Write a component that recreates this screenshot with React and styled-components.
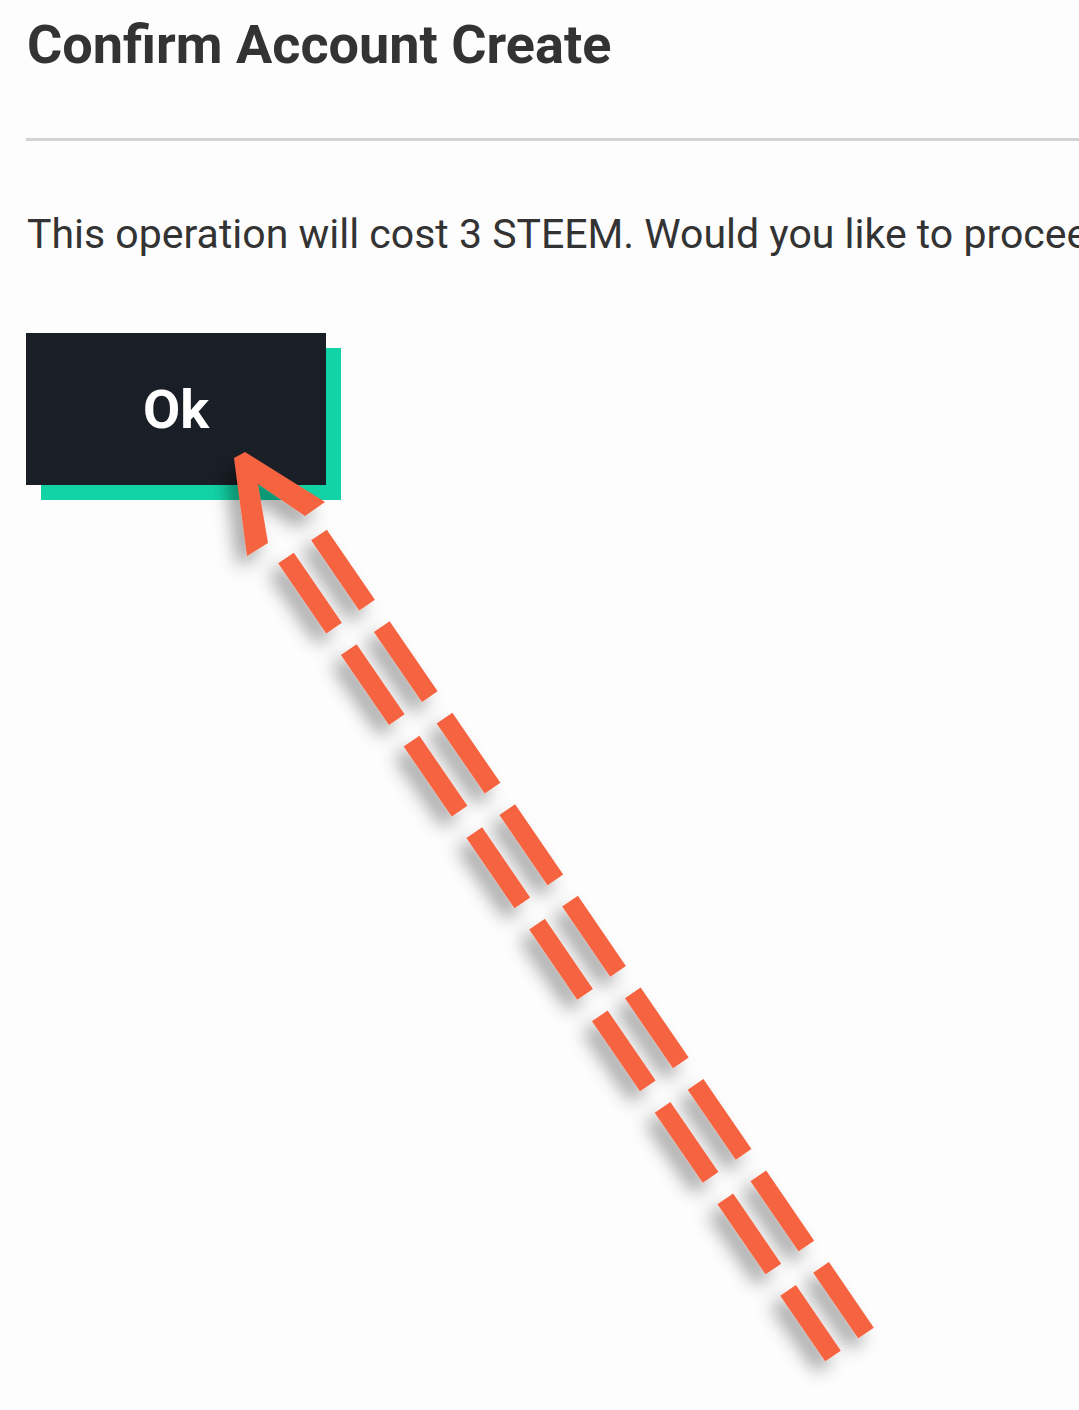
import styled, { createGlobalStyle } from "styled-components"

const GlobalStyle = createGlobalStyle`
    html, body {
        margin: 0;
        padding: 0;
        background: #fdfdfd;
        overflow: hidden;
    }
    body {
        font-family: Roboto, "Liberation Sans", sans-serif;
    }
`

const App = () => {
    return (
        <Page>
            <GlobalStyle />
            <Dialog>
                <Title>Confirm Account Create</Title>
                <Divider />
                <Message>This operation will cost 3 STEEM. Would you like to proceed?</Message>
                <OkButton type="button">Ok</OkButton>
            </Dialog>
            <PointerArrow />
        </Page>
    )
}

export default App

const PointerArrow = () => (
    <ArrowLayer viewBox="0 0 1079 1410" width="1079" height="1410">
        <defs>
            <filter id="arrowShadow" x="-20%" y="-20%" width="140%" height="140%">
                <feDropShadow dx="-9" dy="11" stdDeviation="9" floodColor="#000" floodOpacity="0.36" />
            </filter>
        </defs>
        <g filter="url(#arrowShadow)" fill="#f5633f" stroke="#f5633f">
            <line x1="286" y1="558" x2="833" y2="1356" strokeWidth="19" strokeDasharray="85 26" />
            <line x1="319" y1="535" x2="866" y2="1333" strokeWidth="19" strokeDasharray="85 26" />
            <polygon
                stroke="none"
                points="234,458 245,452 325,502 305,516 258,484 268,543 247,556"
            />
        </g>
    </ArrowLayer>
)

const Page = styled.div`
    position: relative;
    width: 1079px;
    height: 1410px;
    overflow: hidden;
`

const Dialog = styled.div`
    padding: 12px 0 0 26px;
    display: flex;
    flex-direction: column;
    align-items: flex-start;
`

const Title = styled.h2`
    margin: 0;
    font-family: Roboto, "Liberation Sans", sans-serif;
    font-weight: 700;
    font-size: 54px;
    line-height: 66px;
    color: #333333;
    padding-left: 1px;
`

const Divider = styled.div`
    align-self: stretch;
    height: 3px;
    margin-top: 60px;
    background: #d3d3d3;
`

const Message = styled.p`
    margin: 70px 0 0 0;
    font-family: Roboto, "Liberation Sans", sans-serif;
    font-weight: 400;
    font-size: 41px;
    line-height: 46px;
    color: #333333;
    white-space: nowrap;
    padding-left: 1px;
`

const OkButton = styled.button`
    margin-top: 76px;
    width: 300px;
    height: 152px;
    border: none;
    background: #1a1f27;
    color: #ffffff;
    font-family: Roboto, "Liberation Sans", sans-serif;
    font-weight: 700;
    font-size: 54px;
    box-shadow: 15px 15px 0 #12d3a5;
    cursor: pointer;
`

const ArrowLayer = styled.svg`
    position: absolute;
    left: 0;
    top: 0;
    pointer-events: none;
`
